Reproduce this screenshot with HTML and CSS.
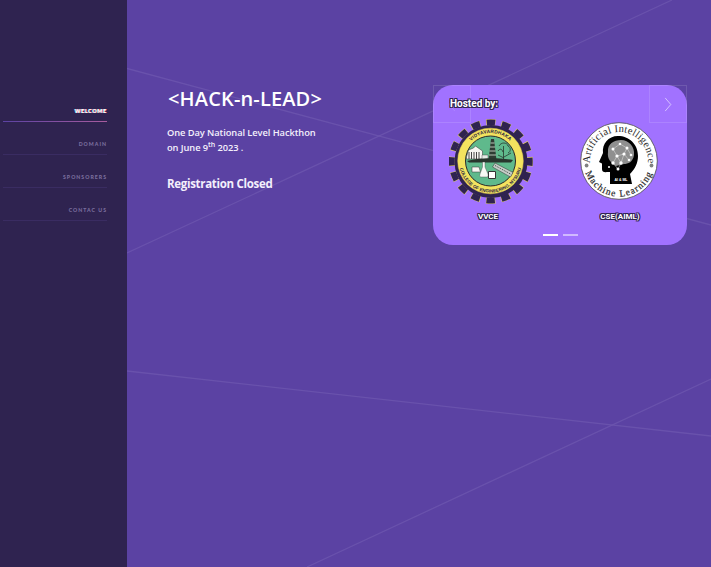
FILE: index.html
```html
<!DOCTYPE html>
<html lang="en">
<head>
<meta charset="utf-8">
<title>HACK-n-LEAD</title>
<link rel="stylesheet" href="styles.css">
</head>
<body>
<aside class="sidebar">
  <nav class="nav">
    <a class="nav-item active">Welcome</a>
    <a class="nav-item">Domain</a>
    <a class="nav-item">Sponsorers</a>
    <a class="nav-item">Contac us</a>
  </nav>
</aside>
<main class="main">
  <svg class="bg-lines" viewBox="0 0 584 567" preserveAspectRatio="none" aria-hidden="true">
    <line x1="0" y1="68.500" x2="584" y2="225"/>
    <line x1="0" y1="253" x2="545" y2="0"/>
    <line x1="0" y1="371" x2="584" y2="436"/>
    <line x1="584" y1="379" x2="180" y2="567"/>
  </svg>
  <section class="intro">
    <h1 class="title">&lt;HACK-n-LEAD&gt;</h1>
    <p class="lead">One Day National Level Hackthon<br>on June 9<sup>th</sup> 2023 .</p>
    <p class="status">Registration Closed</p>
  </section>
  <section class="card">
    <h2 class="hosted outlined">Hosted by:</h2>
    <div class="slides">
      <figure class="slide slide-left">
        <svg class="logo logo-gear" viewBox="0 0 84 85">
          <defs>
            <path id="ringTop" d="M41.500 70 A28 28 0 1 1 41.510 70"/>
            <path id="ringBottom" d="M41.500 10.500 A31.500 31.500 0 1 0 41.510 10.500"/>
          </defs>
          <circle cx="41.700" cy="42.500" r="39" fill="none" stroke="#e9d95a" stroke-width="6.400" stroke-dasharray="9.300 6" stroke-dashoffset="4.650"/>
          <circle cx="41.700" cy="42.500" r="39" fill="none" stroke="#2f2350" stroke-width="6" stroke-dasharray="8.400 6.910" stroke-dashoffset="4.200" stroke-linejoin="round"/>
          <circle cx="42" cy="42.500" r="36.500" fill="#2f2350"/>
          <circle cx="41.500" cy="42" r="32.800" fill="#f3e35f" stroke="#e8d44c" stroke-width=".5"/>
          <circle cx="41.500" cy="42" r="25" fill="#5fb98c" stroke="#2a2a2a" stroke-width="1"/>
          <path d="M17.500 38 l2-7 l5-2 l2-2 l7 5 v8 h-16 Z" fill="#f6f6f2" stroke="#333" stroke-width=".5"/>
          <path d="M20 33 v7 M22.500 33 v7 M25 33 v7 M27.500 33 v7 M30 33 v7" stroke="#333" stroke-width=".9"/>
          <path d="M42 20 h3 l2.500 21 h-8 Z" fill="#2f3b33"/>
          <path d="M41.500 24 h4 M41 28 h5 M40.500 32 h6 M40 36 h7" stroke="#d8e6d8" stroke-width=".8"/>
          <path d="M33 36 h6 v5 h-6 Z" fill="#e5ece6" stroke="#333" stroke-width=".4"/>
          <path d="M18 42 c8-3 30-4 46-1 l-2 2.500 h-42 Z" fill="#28352d"/>
          <path d="M50 27 c2-4 8-4 9 0 c3 1 3 6 0 7 M54.500 27 v13 M49 32 c2-3 4-2 5 1 M62 34 l-7 4 M49 36 l6 3" fill="none" stroke="#28352d" stroke-width=".8"/>
          <path d="M23 48 h7 l1.500 5 h-8.500 Z" fill="#f6f6f2" stroke="#333" stroke-width=".5"/>
          <path d="M33.500 43 h2.500 v5 l3 7 c.5 2.500-.5 3-1.500 3 h-5 c-1.300 0-2.300-.5-1.500-3 l2.500-7 Z" fill="#f6f8f4" stroke="#444" stroke-width=".4"/>
          <path d="M39.500 52.500 h7 v7 h-7 Z" fill="#fff" stroke="#333" stroke-width="1"/>
          <path d="M46 44 l18 9.500 l-2.500 4.500 l-18-10 Z" fill="#c5cec8" stroke="#333" stroke-width=".5"/>
          <path d="M46 46.500 l16 8.800" stroke="#333" stroke-width=".9" stroke-dasharray="1 1"/>
          <text class="ring-text"><textPath href="#ringTop" startOffset="50%" text-anchor="middle">VIDYAVARDHAKA</textPath></text>
          <text class="ring-text ring-small"><textPath href="#ringBottom" startOffset="50%" text-anchor="middle">COLLEGE OF ENGINEERING, MYSURU</textPath></text>
        </svg>
        <figcaption class="caption outlined">VVCE</figcaption>
      </figure>
      <figure class="slide slide-right">
        <svg class="logo logo-ai" viewBox="0 0 78 78">
          <defs>
            <path id="aiTop" d="M39 68 A29 29 0 1 1 39.010 68"/>
            <path id="aiBottom" d="M39 3.500 A35.500 35.500 0 1 0 39.010 3.500"/>
          </defs>
          <circle cx="39" cy="39" r="38.300" fill="#fff" stroke="#4a4a4a" stroke-width=".8"/>
          <text class="ai-text"><textPath href="#aiTop" startOffset="50%" text-anchor="middle">Artificial Intelligence</textPath></text>
          <text class="ai-text ai-lower"><textPath href="#aiBottom" startOffset="50%" text-anchor="middle">Machine Learning</textPath></text>
          <circle cx="6.600" cy="43.500" r="1.900" fill="#808080"/>
          <circle cx="71.500" cy="43.500" r="1.900" fill="#808080"/>
          <path d="M38 14 C28 14 22 22 23 31 L19 40 L22 41.500 L22 47 C22 50 24 50.500 28 50 L30 50 L30 62 L52 62 L50 52 C55 47 58 41 58 34 C58 22 49 14 38 14 Z" fill="#000"/>
          <path d="M28 30 C27 22 34 18 41 18 C49 18 55 25 54 33 C53 40 48 42 44 42 L36 44 C31 41 27 37 28 30 Z" fill="#8f8f8f"/>
          <path d="M33 27 L40 22 L47 26 L51 33 M33 27 L37 34 L44 32 L47 26 M37 34 L33 41 M37 34 L41 41 L44 32 M44 32 L49 38 M33 41 L38 47 L41 41" fill="none" stroke="#d5d5d5" stroke-width=".6"/>
          <g fill="#fff">
            <circle cx="33" cy="27" r="1.500"/><circle cx="40" cy="22" r="1.300"/><circle cx="47" cy="26" r="1.500"/>
            <circle cx="51" cy="33" r="1.300"/><circle cx="37" cy="34" r="1.600"/><circle cx="44" cy="32" r="1.600"/>
            <circle cx="33" cy="41" r="1.700"/><circle cx="41" cy="41" r="1.700"/><circle cx="49" cy="38" r="1.300"/>
            <circle cx="38" cy="47" r="1.500"/><circle cx="29" cy="45" r="1"/>
          </g>
          <text class="ai-mini" x="41" y="59" text-anchor="middle">AI &amp; ML</text>
        </svg>
        <figcaption class="caption outlined">CSE(AIML)</figcaption>
      </figure>
    </div>
    <div class="dots"><span class="dot dot-active"></span><span class="dot"></span></div>
    <button class="arrow arrow-prev" aria-label="Previous">
      <svg viewBox="0 0 8 16"><path d="M7 1 L1 8 L7 15"/></svg>
    </button>
    <button class="arrow arrow-next" aria-label="Next">
      <svg viewBox="0 0 8 16"><path d="M1 1 L7 8 L1 15"/></svg>
    </button>
  </section>
</main>
</body>
</html>
```

FILE: styles.css
```css
* { box-sizing: border-box; }
html, body { height: 100%; }
body {
  margin: 0;
  display: flex;
  min-height: 567px;
  overflow: hidden;
  background: #5b42a3;
  color: #fff;
  font-family: "Open Sans", "Noto Sans", sans-serif;
}
.sidebar {
  flex: 0 0 127px;
  background: #2f2350;
  padding: 88.500px 20px 0 3px;
}
.nav { display: flex; flex-direction: column; }
.nav-item {
  height: 33.200px;
  padding-top: 18.300px;
  line-height: 8px;
  text-align: right;
  font-family: "Lato", sans-serif;
  font-size: 5.200px;
  font-weight: 900;
  letter-spacing: 1px;
  text-transform: uppercase;
  color: #7b6f9e;
  border-bottom: 1px solid #3a2c62;
}
.nav-item.active {
  color: #fff;
  letter-spacing: .8px;
  text-shadow: .6px 0 0 #ff5a7a, -.6px 0 0 #7fe8ff;
  border-bottom: 1px solid;
  border-image: linear-gradient(90deg, #5b42a3, #a95c9f) 1;
}
.main {
  position: relative;
  flex: 1;
  display: flex;
  align-items: flex-start;
  padding: 85px 24px 0 40px;
  background: #5b42a3;
}
.bg-lines {
  position: absolute;
  inset: 0;
  width: 100%;
  height: 100%;
}
.bg-lines line { stroke: #6d56af; stroke-width: 1.300; opacity: .8; }
.intro { position: relative; flex: 1; padding-top: 2px; }
.title {
  margin: 0 0 14px;
  padding-left: 1px;
  font-size: 20px;
  line-height: 24px;
  font-weight: 600;
  letter-spacing: .15px;
}
.lead {
  margin: 0 0 21px;
  font-size: 9.300px;
  line-height: 15px;
  font-weight: 600;
  letter-spacing: -.07px;
  color: #f4f0fc;
}
.lead sup { font-size: 7px; line-height: 0; }
.status {
  margin: 0;
  font-size: 11.500px;
  line-height: 16px;
  font-weight: 700;
  letter-spacing: -.3px;
  color: #f3effc;
}
.card {
  position: relative;
  flex: 0 0 254px;
  height: 160px;
  padding: 13px 0 0 17px;
  border-radius: 20px;
  background: #a172ff;
}
.outlined {
  color: #fff;
  font-family: "Roboto", sans-serif;
  font-weight: 700;
  text-shadow: 1px 0 0 #2f2350, -1px 0 0 #2f2350, 0 1px 0 #2f2350, 0 -1px 0 #2f2350,
    1px 1px 0 #2f2350, -1px -1px 0 #2f2350, 1px -1px 0 #2f2350, -1px 1px 0 #2f2350;
}
.hosted { margin: 0; font-size: 10px; line-height: 12px; }
.slides {
  display: flex;
  margin: 0 0 0 -1px;
}
.slide {
  margin: 0;
  display: flex;
  flex-direction: column;
  align-items: center;
}
.slide-left { width: 84px; }
.slide-right { width: 78px; margin-left: 47px; margin-top: 3px; }
.logo { display: block; }
.logo-gear { width: 84px; height: 85px; margin-top: 9px; }
.logo-ai { width: 78px; height: 78px; margin-top: 9px; }
.caption { font-size: 8px; line-height: 10px; }
.slide-left .caption { margin-top: 8px; margin-right: 6px; }
.slide-right .caption { margin-top: 12px; margin-left: 2px; }
.ring-text {
  font-family: "Liberation Sans", sans-serif;
  font-weight: 700;
  font-size: 4.800px;
  letter-spacing: .15px;
  fill: #2b2340;
}
.ring-small { font-size: 4.500px; letter-spacing: 0; }
.ai-text {
  font-family: "Liberation Serif", serif;
  font-size: 10.500px;
  letter-spacing: .2px;
  fill: #2a2a2a;
}
.ai-lower { font-size: 9.500px; letter-spacing: 1.100px; stroke: #2a2a2a; stroke-width: .2px; }
.ai-mini {
  font-family: "Liberation Sans", sans-serif;
  font-size: 3.500px;
  font-weight: 700;
  fill: #fff;
}
.dots {
  position: absolute;
  left: 0;
  right: 0;
  bottom: 9px;
  display: flex;
  justify-content: center;
  gap: 5px;
}
.dot { width: 15px; height: 2px; background: rgba(255,255,255,.5); }
.dot-active { background: #fff; }
.arrow {
  position: absolute;
  top: 0;
  width: 38px;
  height: 38px;
  padding: 0;
  display: flex;
  align-items: center;
  justify-content: center;
  background: none;
  border: 1px solid rgba(255,255,255,.12);
}
.arrow svg { width: 8px; height: 15px; }
.arrow path { fill: none; stroke: rgba(255,255,255,.6); stroke-width: 1; }
.arrow-prev { left: 0; }
.arrow-prev path { stroke: rgba(255,255,255,.15); }
.arrow-next { right: 0; }
```
